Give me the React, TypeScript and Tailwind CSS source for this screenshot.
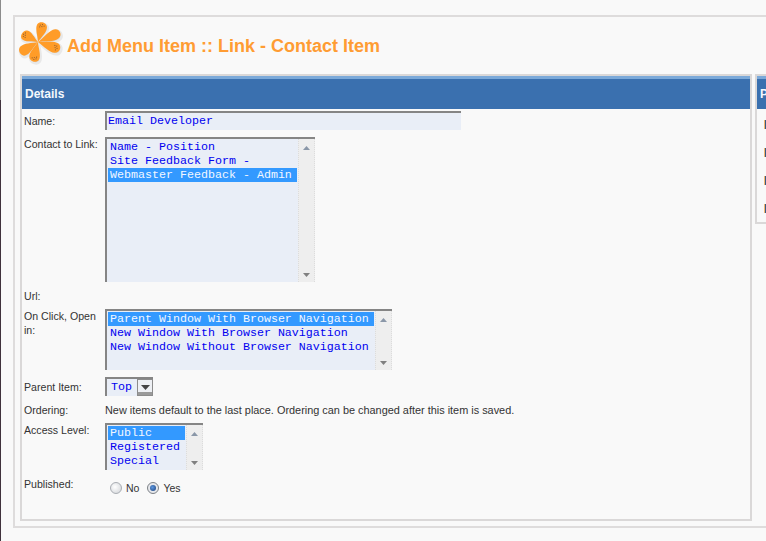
const mono = "font-['Liberation_Mono',monospace] text-[11.67px] leading-[14px] text-[#0000f0]";

function ListBox({
  items,
  selected,
  width,
  listWidth,
  height,
}: {
  items: string[];
  selected: number;
  width: string;
  listWidth: string;
  height: string;
}) {
  return (
    <div className={`flex border-t-[2px] border-l-[2px] border-[#858585] bg-[#e9eef7] ${width} ${height}`}>
      <div className={`pt-[1px] pl-[1px] ${listWidth}`}>
        {items.map((item, i) => (
          <div
            key={item}
            className={`${mono} whitespace-pre pl-[2px] ${i === selected ? "bg-[#3399ff] !text-[#f2f7ff]" : ""}`}
          >
            {item}
          </div>
        ))}
      </div>
      <div className="ml-[1px] flex flex-1 flex-col items-center justify-between border-r border-l border-dotted border-[#dcdcdc] bg-[#eeeeee] pt-[7px] pb-[5px]">
        <svg width="7" height="4" viewBox="0 0 7 4"><path d="M3.5 0L7 4H0z" fill="#8a97a8" /></svg>
        <svg width="7" height="4" viewBox="0 0 7 4"><path d="M0 0h7L3.5 4z" fill="#808080" /></svg>
      </div>
    </div>
  );
}

function Row({ label, className, children }: { label: string; className: string; children?: React.ReactNode }) {
  return (
    <div className={`flex ${className}`}>
      <div className="w-[83px] shrink-0 pr-[6px] pl-[2px] text-[10.6px] leading-[14px] text-[#333333]">{label}</div>
      {children}
    </div>
  );
}

// angle, length and dotted texture of each petal, measured off the reference logo
const petals: [number, number, boolean][] = [
  [-74, 20, true],
  [-22, 24, false],
  [20, 23, true],
  [105, 20, true],
  [151, 21, false],
  [210, 18, true],
];

function Logo() {
  const petal = (len: number) =>
    `M0 0C${len * 0.3} -2 ${len * 0.62} -7 ${len * 0.86} -5.5C${len * 1.06} -4 ${len * 1.06} 3 ${len * 0.84} 4.5C${len * 0.6} 6 ${len * 0.3} 2 0 0Z`;
  return (
    <svg width="48" height="48" viewBox="0 0 48 48" className="ml-[-3px] shrink-0">
      <g transform="translate(21 20)">
        {petals.map(([a, len]) => (
          <path
            key={a}
            d={petal(len)}
            fill="#d8d8d8"
            stroke="#e8e8e8"
            strokeWidth="2.5"
            transform={`translate(1 1.5) rotate(${a})`}
          />
        ))}
        {petals.map(([a, len, dotted]) => (
          <g key={a} transform={`rotate(${a})`}>
            <path d={petal(len)} fill="#ff9c28" />
            {dotted && (
              <g fill="#8a5a30">
                <rect x={len * 0.72} y="-3" width="1" height="1" />
                <rect x={len * 0.72 + 2} y="-3" width="1" height="1" />
                <rect x={len * 0.72 + 1} y="-1" width="1" height="1" />
                <rect x={len * 0.72 + 3} y="-1" width="1" height="1" />
                <rect x={len * 0.72 + 2} y="1" width="1" height="1" />
              </g>
            )}
          </g>
        ))}
      </g>
    </svg>
  );
}

export default function App() {
  return (
    <div className="flex h-[541px] w-[766px] overflow-hidden bg-[#f9f9f9] font-['Liberation_Sans',sans-serif]">
      <div className="flex w-[1px] shrink-0 flex-col">
        <div className="h-[100px] bg-[#8c8c8c]" />
        <div className="flex-1 bg-[#40323c]" />
      </div>
      <div className="mt-[15px] ml-[12px] h-[513px] w-[800px] shrink-0 border-[2px] border-r-0 border-[#dedcdc] pl-[5px]">
        <div className="flex h-[57px] items-center pt-[1px]">
          <Logo />
          <h1 className="ml-[2px] text-[18px] font-bold text-[#ff9c33]">Add Menu Item :: Link - Contact Item</h1>
        </div>
        <div className="flex items-start gap-[3px]">
          <div className="h-[447px] w-[732px] shrink-0 border-[2px] border-[#dad8d8]">
            <div className="border-t-[3px] border-[#7ba9d9] bg-[#3a70af] py-[8px] pl-[3px] text-[12px] leading-[14px] font-bold text-[#f4f8fc]">
              Details
            </div>
            <Row label="Name:" className="mt-[2px] items-center">
              <div className={`h-[19px] w-[356px] border-t-[2px] border-l-[2px] border-[#858585] bg-[#e9eef7] pt-[1px] pl-[1px] ${mono}`}>
                Email Developer
              </div>
            </Row>
            <Row label="Contact to Link:" className="mt-[7px]">
              <ListBox
                items={["Name - Position", "Site Feedback Form -", "Webmaster Feedback - Admin"]}
                selected={2}
                width="w-[210px]"
                listWidth="w-[190px]"
                height="h-[145px]"
              />
            </Row>
            <Row label="Url:" className="mt-[7px]" />
            <Row label="On Click, Open in:" className="mt-[6px]">
              <ListBox
                items={[
                  "Parent Window With Browser Navigation",
                  "New Window With Browser Navigation",
                  "New Window Without Browser Navigation",
                ]}
                selected={0}
                width="w-[287px]"
                listWidth="w-[267px]"
                height="h-[61px]"
              />
            </Row>
            <Row label="Parent Item:" className="mt-[7px] items-center">
              <div className="flex h-[19px] w-[48px] items-stretch border-t-[2px] border-l-[2px] border-[#858585] bg-[#e9eef7]">
                <div className={`w-[30px] pt-[1px] pl-[4px] ${mono}`}>Top</div>
                <div className="flex flex-1 flex-col items-center border-[1px] border-[#8c8c8c] bg-[#eef0f4]">
                  <svg width="9" height="5" viewBox="0 0 9 5" className="mt-[5px]"><path d="M0 0h9L4.5 5z" fill="#444444" /></svg>
                  <div className="mt-auto h-[3px] w-full bg-[#9a9a9a]" />
                </div>
              </div>
            </Row>
            <Row label="Ordering:" className="mt-[7px] items-center">
              <div className="text-[10.9px] leading-[14px] text-[#333333]">
                New items default to the last place. Ordering can be changed after this item is saved.
              </div>
            </Row>
            <Row label="Access Level:" className="mt-[6px]">
              <ListBox
                items={["Public", "Registered", "Special"]}
                selected={0}
                width="w-[98px]"
                listWidth="w-[78px]"
                height="h-[47px]"
              />
            </Row>
            <Row label="Published:" className="mt-[7px]">
              <div className="mt-[2px] ml-[5px] flex items-center text-[10.5px] text-[#333333]">
                <span className="h-[12px] w-[12px] rounded-full border border-[#a9adb3] bg-[radial-gradient(circle_at_40%_40%,#ffffff,#cfd2d6)]" />
                <span className="mt-[2px] ml-[4px]">No</span>
                <span className="ml-[8px] flex h-[12px] w-[12px] items-center justify-center rounded-full border border-[#7d8186] bg-[#e6e8ec]">
                  <span className="h-[6px] w-[6px] rounded-full bg-[radial-gradient(circle_at_40%_40%,#5c97e0,#1c3f78)]" />
                </span>
                <span className="mt-[2px] ml-[4px]">Yes</span>
              </div>
            </Row>
          </div>
          <div className="h-[150px] w-[100px] shrink-0 border-[2px] border-[#dad8d8]">
            <div className="border-t-[3px] border-[#7ba9d9] bg-[#3a70af] py-[8px] pl-[3px] text-[12px] leading-[14px] font-bold text-[#f4f8fc]">
              Parameters
            </div>
            <div className="flex flex-col gap-[19px] pt-[11px] pl-[7px]">
              {[0, 1, 2, 3].map((i) => (
                <div key={i} className="h-[9px] w-[3px] border-l border-[#f5b56e] bg-[#3a5a80]" />
              ))}
            </div>
          </div>
        </div>
      </div>
    </div>
  );
}
